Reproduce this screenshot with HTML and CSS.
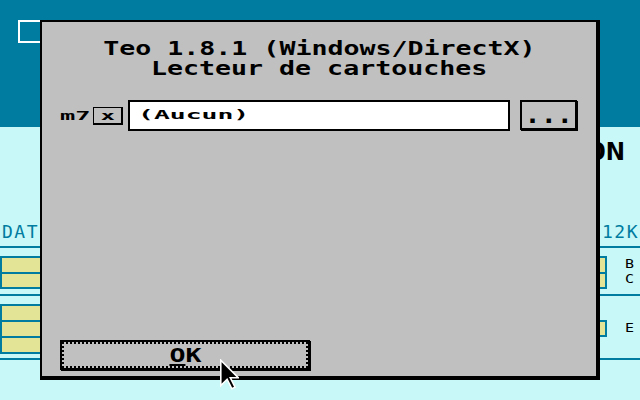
FILE: index.html
```html
<!DOCTYPE html>
<html lang="fr">
<head>
<meta charset="utf-8">
<title>Teo 1.8.1 - Lecteur de cartouches</title>
<link rel="stylesheet" href="styles.css">
</head>
<body>
<div class="desk">
  <header class="desk-head"><span class="desk-icon"></span></header>
  <div class="desk-title"><span class="desk-title-text">CONFIGURATION</span></div>
  <div class="desk-labels"><span>DATE</span><span>512K</span></div>
  <div class="rule rule-1"></div>
  <div class="desk-row row-a">
    <div class="cells left-cells"><i></i><i></i></div>
    <div class="right-part">
      <div class="cells small-cells"><i></i><i></i></div>
      <div class="letters"><span>B</span><span>C</span></div>
    </div>
  </div>
  <div class="rule rule-2"></div>
  <div class="desk-row row-b">
    <div class="cells left-cells"><i></i><i></i><i></i></div>
    <div class="right-part">
      <div class="cells small-cells single"><i></i></div>
      <div class="letters"><span>E</span></div>
    </div>
  </div>
  <div class="rule rule-3"></div>
</div>

<div class="dialog">
  <div class="dlg-title">
    <div>Teo 1.8.1 (Windows/DirectX)</div>
    <div>Lecteur de cartouches</div>
  </div>
  <div class="cart-row">
    <div class="cart-label"><span class="wide">m7</span></div>
    <button class="x-btn"><span class="wide">x</span></button>
    <div class="cart-field"><span class="wide">(Aucun)</span></div>
    <button class="more-btn"><span class="dots">...</span></button>
  </div>
  <div class="dlg-foot">
    <button class="ok-btn"><span class="focus"><span class="t16"><u>O</u>K</span></span></button>
  </div>
</div>

<svg class="cursor" viewBox="0 0 12 19" width="19" height="31" aria-hidden="true">
  <path d="M0.5 0.5 L0.5 16.5 L4.5 12.5 L7.5 18.5 L9.5 17.5 L6.5 11.5 L11.5 11.5 Z" fill="#000" stroke="#fff" stroke-width="1" stroke-linejoin="miter"/>
</svg>
</body>
</html>
```

FILE: styles.css
```css
html, body {
  margin: 0;
  padding: 0;
}

body {
  width: 640px;
  height: 400px;
  overflow: hidden;
  position: relative;
  background: #c8f8f8;
  font-family: "DejaVu Sans Mono", "Liberation Mono", monospace;
}

/* ---------- background application ---------- */
.desk-head {
  height: 127px;
  box-sizing: border-box;
  padding: 20px 0 0 18px;
  background: #007ca0;
}

.desk-icon {
  display: block;
  width: 40px;
  height: 23px;
  box-sizing: border-box;
  border: 2px solid #fff;
}

.desk-title {
  margin-top: 13px;
  height: 24px;
  padding-right: 15px;
  font-size: 24px;
  line-height: 24px;
  font-weight: bold;
  text-align: right;
  color: #000;
  white-space: nowrap;
}

.desk-title-text {
  display: inline-block;
  transform: scaleX(1.3);
  transform-origin: right center;
}

.desk-labels {
  margin-top: 59px;
  height: 18px;
  display: flex;
  justify-content: space-between;
  padding: 0 1px 0 2px;
  font-size: 18px;
  line-height: 18px;
  letter-spacing: 1.5px;
  color: #007ca0;
}

.rule {
  height: 2px;
  background: #007ca0;
}

.rule-1 { margin-top: 5px; }
.rule-2 { margin-top: 5px; }
.rule-3 { margin-top: 4px; }

.desk-row {
  display: flex;
  justify-content: space-between;
  margin-top: 8px;
}

.row-a { height: 33px; }
.row-b { height: 50px; }

.cells {
  display: flex;
  flex-direction: column;
  gap: 2px;
  padding: 2px;
  box-sizing: border-box;
  background: #007ca0;
}

.cells i {
  flex: 1;
  background: #e4e496;
}

.left-cells {
  width: 80px;
  height: 100%;
}

.right-part {
  width: 80px;
  display: flex;
  gap: 18px;
}

.small-cells {
  width: 47px;
  height: 33px;
}

.small-cells.single {
  margin-top: 16px;
  height: 17px;
}

.letters {
  display: flex;
  flex-direction: column;
  font-size: 13px;
  line-height: 15px;
  color: #000;
  transform: scaleX(1.15);
  transform-origin: left top;
}

.row-b .letters {
  margin-top: 16px;
}

/* ---------- dialog ---------- */
.dialog {
  position: absolute;
  left: 40px;
  top: 20px;
  width: 560px;
  height: 360px;
  box-sizing: border-box;
  display: flex;
  flex-direction: column;
  padding: 16px 18px 6px;
  background: #c0c0c0;
  border: solid #000;
  border-width: 2px 4px 4px 2px;
  font-family: "DejaVu Sans Mono", "Liberation Mono", monospace;
  font-weight: bold;
  color: #000;
}

.dialog button {
  font: inherit;
  color: inherit;
  background: none;
  margin: 0;
  padding: 0;
  cursor: default;
}

.dlg-title {
  font-size: 19px;
  line-height: 20px;
}

.dlg-title div {
  width: max-content;
  margin: 0 auto;
  transform: scaleX(1.4);
}

.t16 {
  display: inline-block;
  transform: scaleX(1.4);
}

.wide {
  display: inline-block;
  transform: scaleX(2.2);
  transform-origin: left center;
}

.cart-row {
  margin-top: 22px;
  height: 31px;
  display: flex;
  align-items: center;
}

.cart-label {
  width: 33px;
  font-size: 13px;
  line-height: 31px;
}

.cart-label .wide {
  transform: scaleX(1.95);
}

.dialog .x-btn {
  width: 30px;
  height: 18px;
  box-sizing: border-box;
  border: solid #000;
  border-width: 1px 2px 2px 1px;
  font-size: 13px;
  line-height: 15px;
  text-align: center;
}

.x-btn .wide {
  transform: scaleX(1.8);
  transform-origin: center;
}

.cart-field {
  margin-left: 5px;
  width: 382px;
  height: 31px;
  box-sizing: border-box;
  padding-left: 8px;
  border: 2px solid #000;
  background: #fff;
  font-size: 12px;
  line-height: 27px;
  white-space: nowrap;
}

.dialog .more-btn {
  align-self: flex-start;
  margin-left: 10px;
  width: 57px;
  height: 30px;
  box-sizing: border-box;
  border: 2px solid #000;
  box-shadow: 1px 1px 0 #000;
  font-size: 24px;
  line-height: 24px;
  text-align: center;
}

.dots {
  display: inline-block;
  transform: scaleX(1.11);
}

.dlg-foot {
  margin-top: auto;
}

.dialog .ok-btn {
  display: block;
  width: 250px;
  height: 30px;
  box-sizing: border-box;
  border: 2px solid #000;
  box-shadow: 1px 1px 0 #000;
}

.ok-btn .focus {
  display: block;
  height: 100%;
  box-sizing: border-box;
  border: 2px dotted #000;
  font-size: 19px;
  line-height: 22px;
  text-align: center;
}

.ok-btn u {
  text-decoration-thickness: 2px;
  text-underline-offset: 2px;
}

.cursor {
  position: absolute;
  left: 220px;
  top: 359px;
}
```
